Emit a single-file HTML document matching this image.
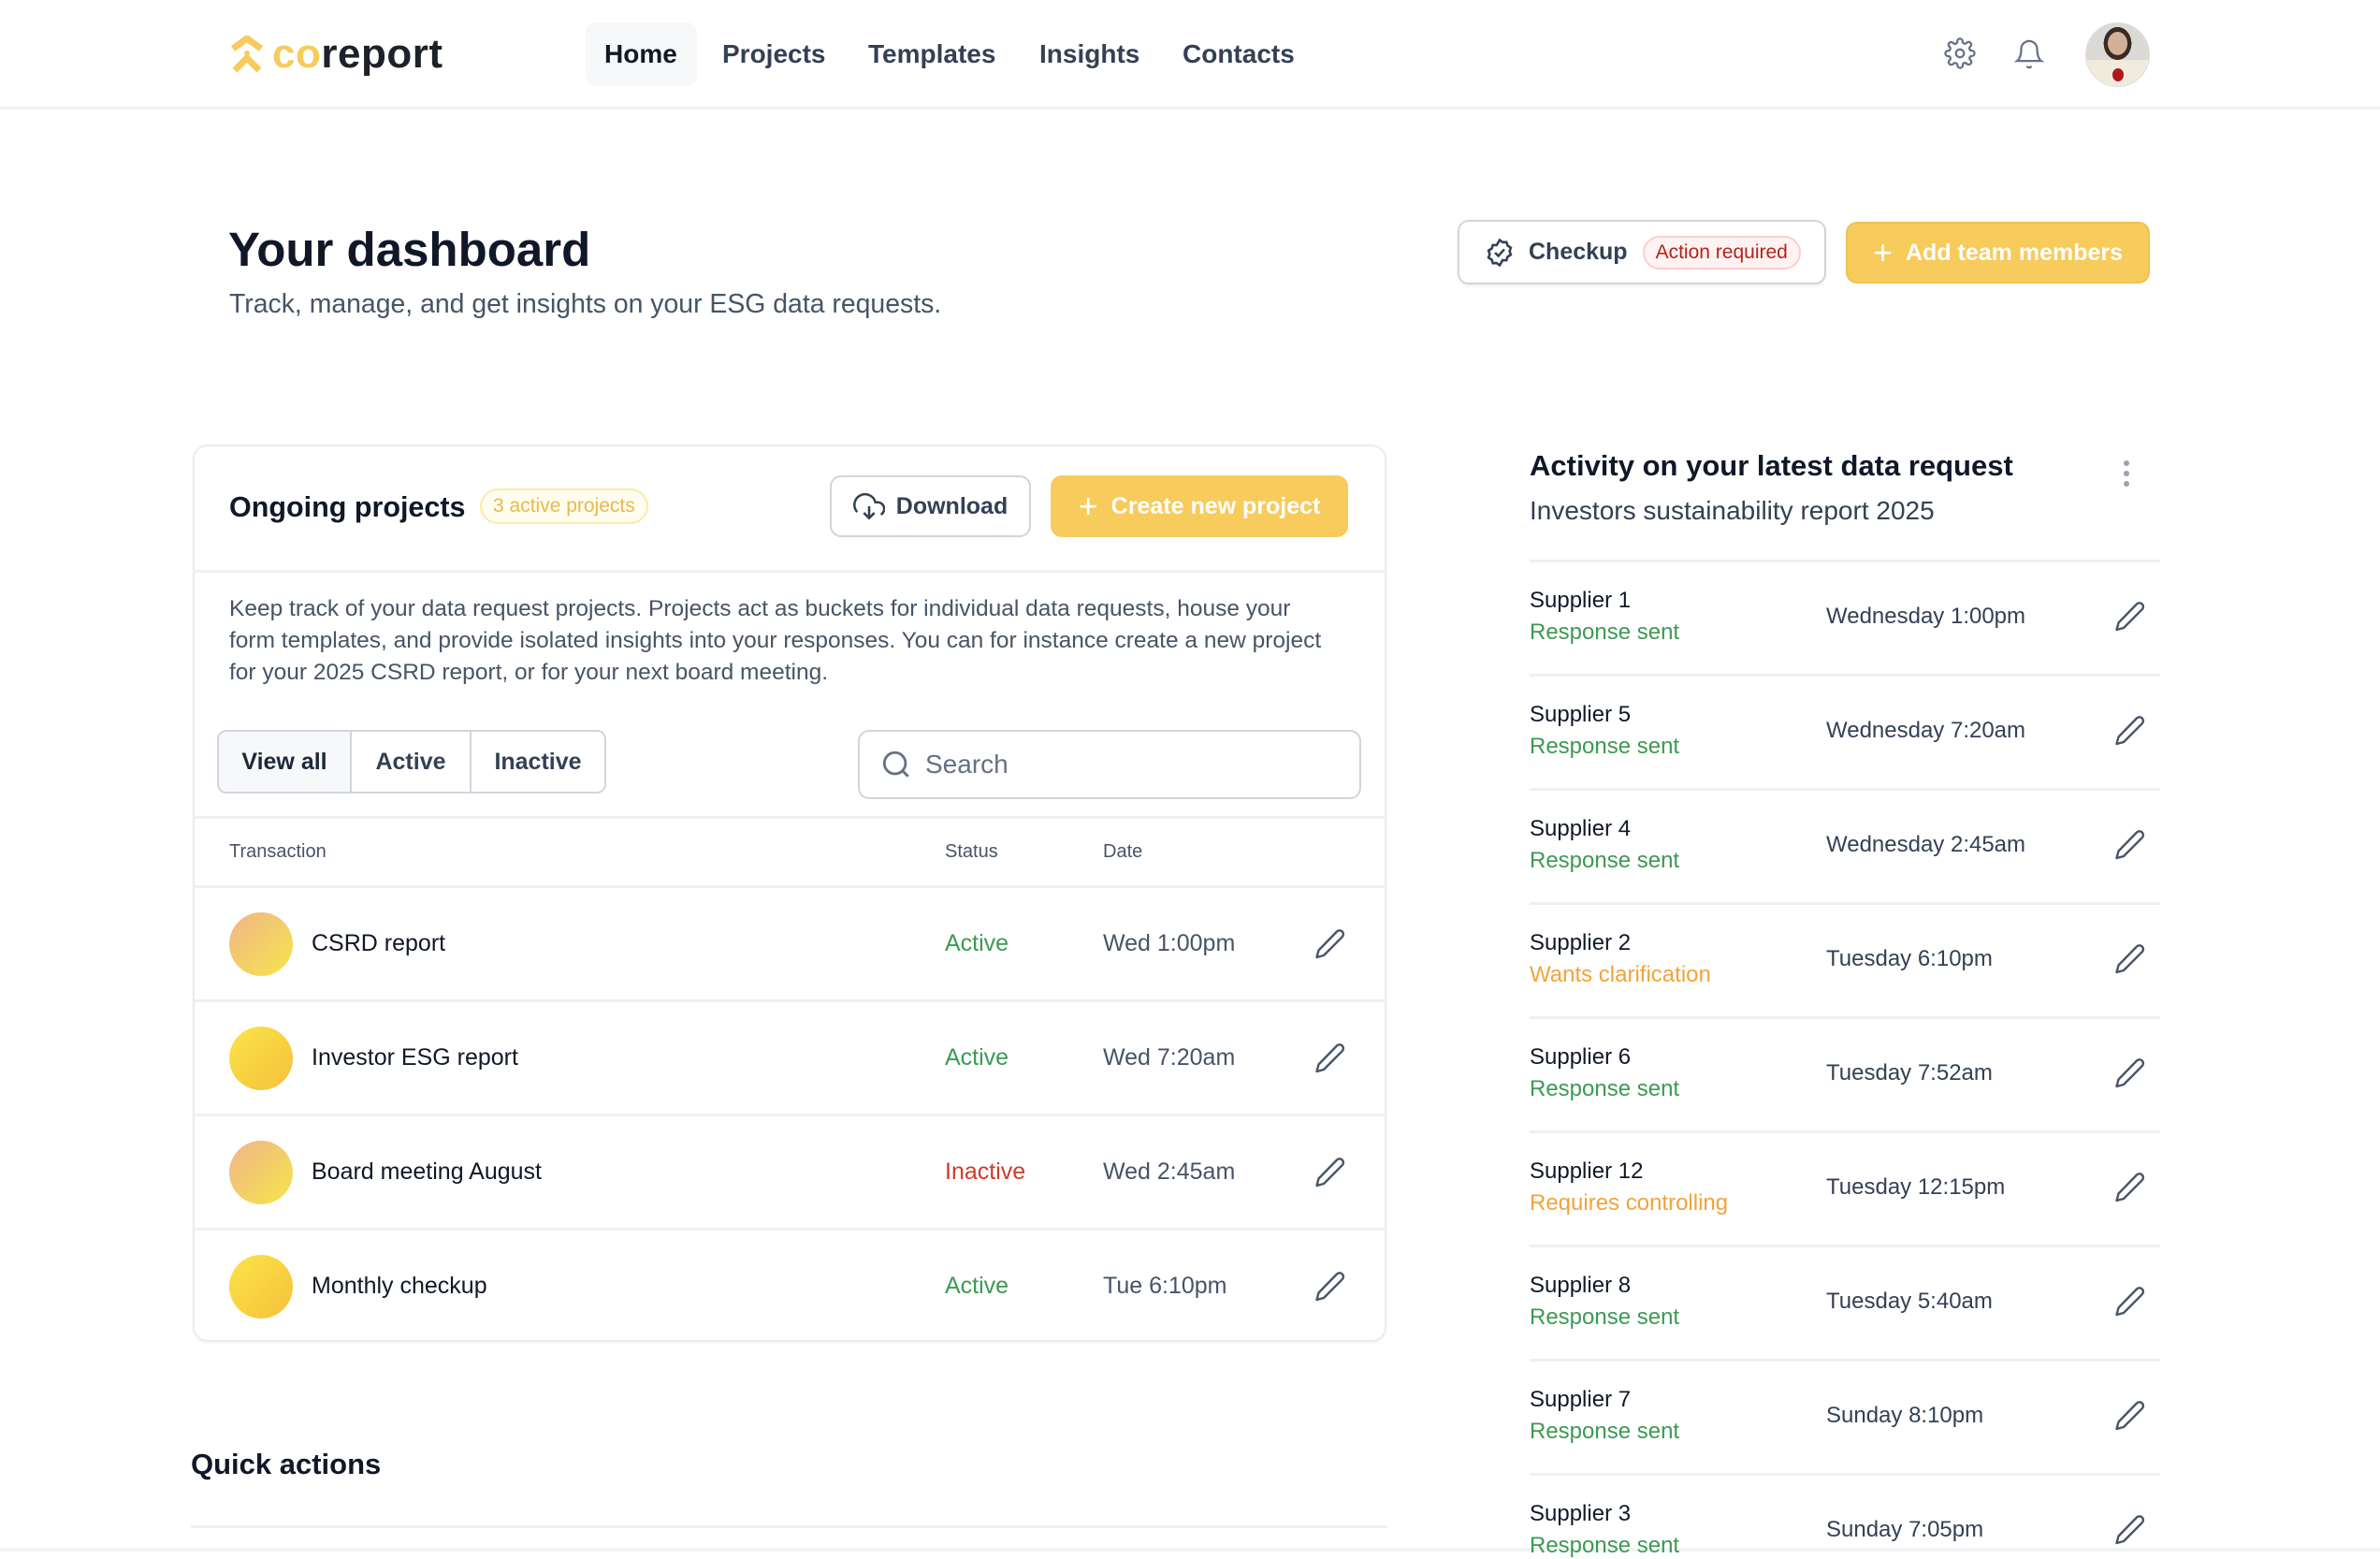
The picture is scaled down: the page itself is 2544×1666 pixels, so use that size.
<!DOCTYPE html>
<html><head><meta charset="utf-8">
<style>
*{box-sizing:border-box;margin:0;padding:0}
html,body{width:2544px;height:1658px;overflow:hidden;background:#fff;font-family:"Liberation Sans",Arial,sans-serif;color:#101828}
.a{position:absolute;white-space:nowrap}
.hdr{position:absolute;left:0;top:0;width:2544px;height:117px;border-bottom:3px solid #eef0f4}
.nav{font-size:28px;color:#344054;font-weight:600}
.btn{position:absolute;border-radius:12px;display:flex;align-items:center;justify-content:center;font-size:25px;font-weight:600}
.line{position:absolute;height:3px;background:#eef0f4}
.pen{position:absolute;width:36px;height:36px}
.sn{font-size:24px;color:#101828}
.ss{font-size:24px}
.tm{font-size:24px;color:#344054}
.g{color:#3c9a52}.o{color:#f2a33a}.r{color:#d13a2a}
</style></head><body>
<div class="hdr"></div>
<svg class="a" style="left:245px;top:38px" width="38" height="40" viewBox="0 0 38 40">
<path d="M4 14 L19 3 L34 14" fill="none" stroke="#f7cb5c" stroke-width="7" stroke-linejoin="round"/>
<path d="M6 37 L19 24 L32 37" fill="none" stroke="#f7cb5c" stroke-width="7" stroke-linejoin="round"/>
<circle cx="19" cy="19" r="3" fill="#f7cb5c"/>
</svg>
<div class="a" style="left:291px;top:28px;font-size:44px;font-weight:700;letter-spacing:0.5px;line-height:60px"><span style="color:#f7cb5c">co</span><span style="color:#1d2129">report</span></div>
<div class="a" style="left:626px;top:24px;width:119px;height:68px;background:#f7f8fa;border-radius:10px"></div>
<div class="a nav" style="left:646px;top:42px;color:#101828">Home</div>
<div class="a nav" style="left:772px;top:42px">Projects</div>
<div class="a nav" style="left:928px;top:42px">Templates</div>
<div class="a nav" style="left:1111px;top:42px">Insights</div>
<div class="a nav" style="left:1264px;top:42px">Contacts</div>
<svg class="a" style="left:2078px;top:40px" width="34" height="34" viewBox="0 0 24 24" fill="none" stroke="#667085" stroke-width="1.6"><circle cx="12" cy="12" r="3"/><path d="M19.4 15a1.7 1.7 0 0 0 .3 1.8l.1.1a2 2 0 1 1-2.8 2.8l-.1-.1a1.7 1.7 0 0 0-1.8-.3 1.7 1.7 0 0 0-1 1.5V21a2 2 0 1 1-4 0v-.1a1.7 1.7 0 0 0-1.1-1.5 1.7 1.7 0 0 0-1.800.3l-.1.1a2 2 0 1 1-2.8-2.8l.1-.1a1.7 1.7 0 0 0 .3-1.8 1.7 1.7 0 0 0-1.5-1H3a2 2 0 1 1 0-4h.1a1.7 1.7 0 0 0 1.5-1.1 1.7 1.7 0 0 0-.3-1.8l-.1-.1a2 2 0 1 1 2.8-2.8l.1.1a1.7 1.7 0 0 0 1.8.3H9a1.7 1.7 0 0 0 1-1.5V3a2 2 0 1 1 4 0v.1a1.7 1.7 0 0 0 1 1.5 1.7 1.7 0 0 0 1.8-.3l.1-.1a2 2 0 1 1 2.8 2.8l-.1.1a1.7 1.7 0 0 0-.3 1.8V9a1.7 1.7 0 0 0 1.5 1H21a2 2 0 1 1 0 4h-.1a1.7 1.7 0 0 0-1.5 1z"/></svg>
<svg class="a" style="left:2152px;top:40px" width="34" height="36" viewBox="0 0 24 24" fill="none" stroke="#667085" stroke-width="1.6"><path d="M18 8a6 6 0 0 0-12 0c0 7-3 9-3 9h18s-3-2-3-9"/><path d="M13.7 21a2 2 0 0 1-3.4 0"/></svg>
<div class="a" style="left:2229px;top:24px;width:69px;height:69px;border-radius:50%;background:radial-gradient(ellipse 22% 26% at 50% 32%,#d2b09a 0 70%,#3a2a24 72% 100%,transparent 101%),linear-gradient(180deg,#dcdad6 0 58%,#f1ebde 59%);overflow:hidden;border:1px solid #ddd"><div style="position:absolute;left:28px;top:48px;width:12px;height:14px;border-radius:50%;background:#b0181c"></div></div>

<div class="a" style="left:244px;top:237px;font-size:51px;font-weight:700;color:#101828">Your dashboard</div>
<div class="a" style="left:245px;top:309px;font-size:28.4px;color:#475467">Track, manage, and get insights on your ESG data requests.</div>
<div class="btn" style="left:1558px;top:235px;width:394px;height:69px;border:2px solid #d0d5dd;background:#fff;justify-content:flex-start;padding-left:26px;box-shadow:0 2px 3px rgba(16,24,40,.06)">
<svg width="34" height="34" viewBox="0 0 24 24" fill="none" stroke="#344054" stroke-width="1.8"><path d="M12 2.5l2.3 1.7 2.8-.2.9 2.7 2.4 1.5-.9 2.7.9 2.7-2.4 1.5-.9 2.7-2.8-.2L12 21.5l-2.3-1.7-2.8.2-.9-2.7L3.6 15.8l.9-2.7-.9-2.7 2.4-1.5.9-2.7 2.8.2z"/><path d="M8.5 12l2.5 2.5 4.5-5"/></svg>
<span style="margin-left:14px;color:#344054">Checkup</span>
<span style="margin-left:16px;font-size:21px;font-weight:400;color:#b42318;background:#fef3f2;border:2px solid #fecdca;border-radius:20px;padding:4px 12px">Action required</span></div>
<div class="btn" style="left:1973px;top:237px;width:325px;height:66px;background:#f7cb5c;border:2px solid #f0c14e;color:#fff"><span style="font-size:36px;font-weight:300;margin-right:14px;line-height:30px">+</span>Add team members</div>

<div class="a" style="left:206px;top:475px;width:1276px;height:959px;border:2px solid #eaecf0;border-radius:16px;box-shadow:0 1px 3px rgba(16,24,40,.05)"></div>
<div class="a" style="left:245px;top:525px;font-size:30.5px;font-weight:700">Ongoing projects</div>
<div class="a" style="left:513px;top:522px;height:38px;padding:0 12px;border:2px solid #fdeaa8;background:#fffcf0;border-radius:20px;font-size:21px;color:#e9b949;line-height:34px">3 active projects</div>
<div class="btn" style="left:887px;top:508px;width:215px;height:66px;border:2px solid #d0d5dd;color:#344054;background:#fff"><svg width="34" height="34" viewBox="0 0 24 24" fill="none" stroke="#344054" stroke-width="1.8" style="margin-right:12px"><path d="M8 17l4 4 4-4M12 12v9"/><path d="M20.9 18.3A5 5 0 0 0 18 9h-1.3A8 8 0 1 0 3 16.3"/></svg>Download</div>
<div class="btn" style="left:1123px;top:508px;width:318px;height:66px;background:#f7cb5c;color:#fff"><span style="font-size:36px;font-weight:300;margin-right:14px;line-height:30px">+</span>Create new project</div>
<div class="line" style="left:207px;top:609px;width:1274px"></div>
<div class="a" style="left:245px;top:634px;font-size:24.5px;color:#475467;line-height:34px;white-space:normal;width:1180px">Keep track of your data request projects. Projects act as buckets for individual data requests, house your form templates, and provide isolated insights into your responses. You can for instance create a new project for your 2025 CSRD report, or for your next board meeting.</div>
<div class="a" style="left:232px;top:780px;width:416px;height:68px;border:2px solid #d0d5dd;border-radius:10px;overflow:hidden;display:flex;font-size:25px;font-weight:600;color:#344054">
<div style="width:142px;background:#f7f8fa;border-right:2px solid #d0d5dd;display:flex;align-items:center;justify-content:center;color:#1d2939">View all</div>
<div style="width:128px;border-right:2px solid #d0d5dd;display:flex;align-items:center;justify-content:center">Active</div>
<div style="flex:1;display:flex;align-items:center;justify-content:center">Inactive</div></div>
<div class="a" style="left:917px;top:780px;width:538px;height:74px;border:2px solid #d0d5dd;border-radius:12px;display:flex;align-items:center;padding-left:22px;font-size:28px;color:#667085"><svg width="34" height="34" viewBox="0 0 24 24" fill="none" stroke="#667085" stroke-width="2" style="margin-right:14px"><circle cx="11" cy="11" r="8"/><path d="M21 21l-4.3-4.3"/></svg>Search</div>
<div class="line" style="left:207px;top:872px;width:1274px"></div>
<div class="a" style="left:245px;top:899px;font-size:20px;color:#475467">Transaction</div>
<div class="a" style="left:1010px;top:899px;font-size:20px;color:#475467">Status</div>
<div class="a" style="left:1179px;top:899px;font-size:20px;color:#475467">Date</div>
<div class="line" style="left:207px;top:946px;width:1274px"></div>

<div id="rows"></div>
<div class="line" style="left:207px;top:1068px;width:1274px"></div>
<div class="line" style="left:207px;top:1190px;width:1274px"></div>
<div class="line" style="left:207px;top:1312px;width:1274px"></div>

<div class="a" style="left:204px;top:1547px;font-size:31px;font-weight:700">Quick actions</div>
<div class="line" style="left:204px;top:1630px;width:1279px"></div>
<div class="a" style="left:0;top:1654px;width:2544px;height:4px;background:#f2f3f5"></div>

<div class="a" style="left:1635px;top:480px;font-size:31px;font-weight:700">Activity on your latest data request</div>
<div class="a" style="left:1635px;top:530px;font-size:28px;color:#344054">Investors sustainability report 2025</div>
<svg class="a" style="left:2266px;top:490px" width="14" height="32" viewBox="0 0 14 32"><circle cx="7" cy="5" r="3" fill="#98a2b3"/><circle cx="7" cy="16" r="3" fill="#98a2b3"/><circle cx="7" cy="27" r="3" fill="#98a2b3"/></svg>
<div id="acts"></div>

<script>
var pen='<path d="M25 4.5a4 4 0 0 1 5.7 5.7L11 30l-7.5 2 2-7.5z" fill="none" stroke="#475467" stroke-width="2.4" stroke-linejoin="round"/>';
var rows=[["CSRD report","Active","g","Wed 1:00pm","linear-gradient(135deg,#f0b48a,#f6e64a)"],["Investor ESG report","Active","g","Wed 7:20am","linear-gradient(135deg,#fae44a,#f5c13a)"],["Board meeting August","Inactive","r","Wed 2:45am","linear-gradient(135deg,#f0b48a,#f6e64a)"],["Monthly checkup","Active","g","Tue 6:10pm","linear-gradient(135deg,#fae44a,#f5c13a)"]];
var h='';rows.forEach(function(r,i){var c=1009+i*122;
h+='<div class="a" style="left:245px;top:'+(c-34)+'px;width:68px;height:68px;border-radius:50%;background:'+r[4]+'"></div>';
h+='<div class="a" style="left:333px;top:'+(c-15)+'px;font-size:25px;font-weight:500">'+r[0]+'</div>';
h+='<div class="a '+r[2]+'" style="left:1010px;top:'+(c-15)+'px;font-size:25px">'+r[1]+'</div>';
h+='<div class="a" style="left:1179px;top:'+(c-15)+'px;font-size:25px;color:#475467">'+r[3]+'</div>';
h+='<svg class="pen" style="left:1404px;top:'+(c-18)+'px" viewBox="0 0 36 36">'+pen+'</svg>';});
document.getElementById('rows').innerHTML=h;
var a=[["Supplier 1","Response sent","g","Wednesday 1:00pm"],["Supplier 5","Response sent","g","Wednesday 7:20am"],["Supplier 4","Response sent","g","Wednesday 2:45am"],["Supplier 2","Wants clarification","o","Tuesday 6:10pm"],["Supplier 6","Response sent","g","Tuesday 7:52am"],["Supplier 12","Requires controlling","o","Tuesday 12:15pm"],["Supplier 8","Response sent","g","Tuesday 5:40am"],["Supplier 7","Response sent","g","Sunday 8:10pm"],["Supplier 3","Response sent","g","Sunday 7:05pm"]];
h='';a.forEach(function(r,i){var t=598+i*122;
h+='<div class="line" style="left:1635px;top:'+t+'px;width:674px"></div>';
h+='<div class="a sn" style="left:1635px;top:'+(t+30)+'px">'+r[0]+'</div>';
h+='<div class="a ss '+r[2]+'" style="left:1635px;top:'+(t+64)+'px">'+r[1]+'</div>';
h+='<div class="a tm" style="left:1952px;top:'+(t+47)+'px">'+r[3]+'</div>';
h+='<svg class="pen" style="left:2259px;top:'+(t+43)+'px" viewBox="0 0 36 36">'+pen+'</svg>';});
document.getElementById('acts').innerHTML=h;
</script>
</body></html>
